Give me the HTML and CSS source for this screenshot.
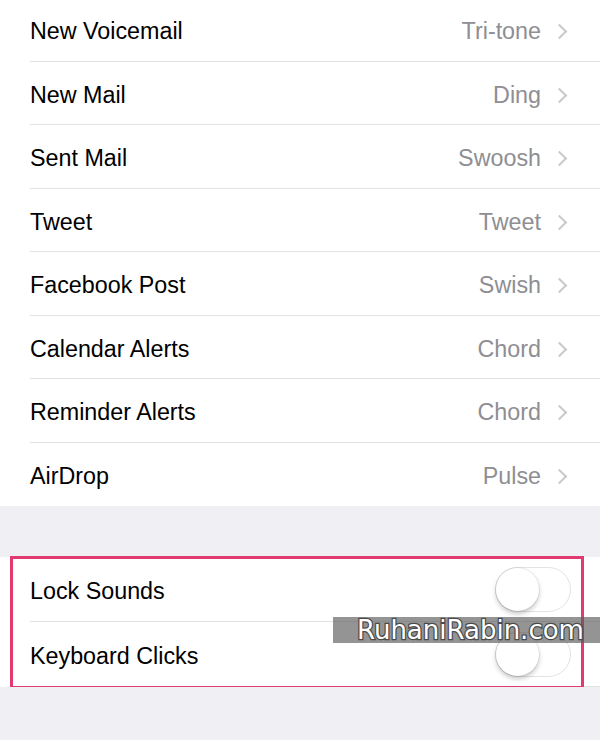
FILE: index.html
```html
<!DOCTYPE html>
<html lang="en">
<head>
    <meta charset="UTF-8">
    <meta name="viewport" content="width=device-width, initial-scale=1.0">
    <title>Sounds</title>
    <link rel="stylesheet" href="styles.css">
</head>
<body>
    <div class="group tones">
        <div class="row"><span class="label">New Voicemail</span><span class="value">Tri-tone</span><span class="chevron"></span></div>
        <div class="row"><span class="label">New Mail</span><span class="value">Ding</span><span class="chevron"></span></div>
        <div class="row"><span class="label">Sent Mail</span><span class="value">Swoosh</span><span class="chevron"></span></div>
        <div class="row"><span class="label">Tweet</span><span class="value">Tweet</span><span class="chevron"></span></div>
        <div class="row"><span class="label">Facebook Post</span><span class="value">Swish</span><span class="chevron"></span></div>
        <div class="row"><span class="label">Calendar Alerts</span><span class="value">Chord</span><span class="chevron"></span></div>
        <div class="row"><span class="label">Reminder Alerts</span><span class="value">Chord</span><span class="chevron"></span></div>
        <div class="row"><span class="label">AirDrop</span><span class="value">Pulse</span><span class="chevron"></span></div>
    </div>

    <div class="group switches">
        <div class="row"><span class="label">Lock Sounds</span><span class="toggle"></span></div>
        <div class="row"><span class="label">Keyboard Clicks</span><span class="toggle"></span></div>
        <!-- annotation box and watermark from the screenshot -->
        <div class="highlight"></div>
        <div class="watermark">RuhaniRabin.com</div>
    </div>
</body>
</html>
```

FILE: styles.css
```css
body {
    margin: 0;
    background-color: #efeff4;
    font-family: "Liberation Sans", Arial, sans-serif;
    overflow: hidden;
}
.group {
    background-color: #fff;
}
.tones {
    margin-top: -2px;
}
.switches {
    position: relative;
    margin-top: 51px;
}
.row {
    display: flex;
    align-items: center;
    height: 63.5px;
    margin-left: 30px;
    padding-top: 5px;
    padding-right: 30px;
    border-bottom: 1px solid #e2e2e6;
    box-sizing: border-box;
}
.row:last-of-type {
    border-bottom: none;
}
.switches .row {
    height: 65px;
    padding-top: 0;
    padding-right: 29px;
}
.switches .label {
    padding-top: 4px;
}
.label {
    flex: 1;
    font-size: 23.3px;
    color: #000;
}
.value {
    font-size: 23.3px;
    color: #8e8e93;
    margin-right: 13px;
}
.chevron {
    width: 9px;
    height: 9px;
    border-top: 2px solid #c9c9ce;
    border-right: 2px solid #c9c9ce;
    transform: rotate(45deg);
    margin-right: 5px;
}
.toggle {
    position: relative;
    width: 74px;
    height: 43px;
    border: 1.5px solid #e3e3e6;
    border-radius: 23px;
    background-color: #fff;
}
.toggle::after {
    content: "";
    position: absolute;
    left: 0;
    top: 0;
    width: 43px;
    height: 43px;
    border-radius: 50%;
    background-color: #fff;
    box-shadow: 0 3px 5px rgba(0, 0, 0, 0.22), 0 0 0 1px rgba(0, 0, 0, 0.06);
}
.highlight {
    position: absolute;
    left: 10px;
    right: 16px;
    top: -1px;
    bottom: -2px;
    border: 3px solid #e13a6f;
}
.watermark {
    position: absolute;
    left: 333px;
    right: 0;
    top: 60px;
    height: 26px;
    padding-left: 24px;
    background-color: rgba(90, 90, 90, 0.65);
    font-family: "DejaVu Sans", sans-serif;
    font-size: 26px;
    line-height: 26px;
    color: #fff;
    -webkit-text-stroke: 2.5px #4a4a4a;
    paint-order: stroke fill;
}
```
